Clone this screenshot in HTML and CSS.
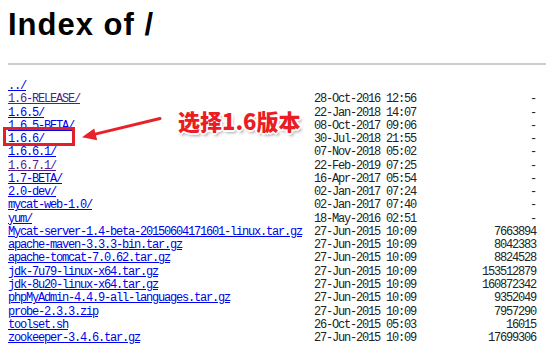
FILE: index.html
```html
<!DOCTYPE html>
<html>
  <head>
    <meta charset="utf-8" />
    <title>Index of /</title>
    <link rel="stylesheet" href="styles.css">
  </head>

  <body>
    <h1>Index of /</h1>
    <hr>

    <div class="listing">
      <a href="../">../</a><span></span><span></span>
      <a class="seen" href="1.6-RELEASE/">1.6-RELEASE/</a><span>28-Oct-2016 12:56</span><span class="size">-</span>
      <a href="1.6.5/">1.6.5/</a><span>22-Jan-2018 14:07</span><span class="size">-</span>
      <a href="1.6.5-BETA/">1.6.5-BETA/</a><span>08-Oct-2017 09:06</span><span class="size">-</span>
      <a href="1.6.6/">1.6.6/</a><span>30-Jul-2018 21:55</span><span class="size">-</span>
      <a href="1.6.6.1/">1.6.6.1/</a><span>07-Nov-2018 05:02</span><span class="size">-</span>
      <a class="seen" href="1.6.7.1/">1.6.7.1/</a><span>22-Feb-2019 07:25</span><span class="size">-</span>
      <a href="1.7-BETA/">1.7-BETA/</a><span>16-Apr-2017 05:54</span><span class="size">-</span>
      <a href="2.0-dev/">2.0-dev/</a><span>02-Jan-2017 07:24</span><span class="size">-</span>
      <a href="mycat-web-1.0/">mycat-web-1.0/</a><span>02-Jan-2017 07:40</span><span class="size">-</span>
      <a href="yum/">yum/</a><span>18-May-2016 02:51</span><span class="size">-</span>
      <a href="Mycat-server-1.4-beta-20150604171601-linux.tar.gz">Mycat-server-1.4-beta-20150604171601-linux.tar.gz</a><span>27-Jun-2015 10:09</span><span class="size">7663894</span>
      <a href="apache-maven-3.3.3-bin.tar.gz">apache-maven-3.3.3-bin.tar.gz</a><span>27-Jun-2015 10:09</span><span class="size">8042383</span>
      <a href="apache-tomcat-7.0.62.tar.gz">apache-tomcat-7.0.62.tar.gz</a><span>27-Jun-2015 10:09</span><span class="size">8824528</span>
      <a href="jdk-7u79-linux-x64.tar.gz">jdk-7u79-linux-x64.tar.gz</a><span>27-Jun-2015 10:09</span><span class="size">153512879</span>
      <a href="jdk-8u20-linux-x64.tar.gz">jdk-8u20-linux-x64.tar.gz</a><span>27-Jun-2015 10:09</span><span class="size">160872342</span>
      <a href="phpMyAdmin-4.4.9-all-languages.tar.gz">phpMyAdmin-4.4.9-all-languages.tar.gz</a><span>27-Jun-2015 10:09</span><span class="size">9352049</span>
      <a href="probe-2.3.3.zip">probe-2.3.3.zip</a><span>27-Jun-2015 10:09</span><span class="size">7957290</span>
      <a href="toolset.sh">toolset.sh</a><span>26-Oct-2015 05:03</span><span class="size">16015</span>
      <a href="zookeeper-3.4.6.tar.gz">zookeeper-3.4.6.tar.gz</a><span>27-Jun-2015 10:09</span><span class="size">17699306</span>
    </div>

    <!-- пометка поверх скриншота -->
    <div class="mark-box"></div>
    <svg class="mark-arrow" width="554" height="356" viewBox="0 0 554 356">
      <line x1="160" y1="118.5" x2="93" y2="134.6" stroke="#e8222a" stroke-width="3" stroke-linecap="round" />
      <polygon points="82,137.3 94.2,128.6 97.2,140.2" fill="#e8222a" />
    </svg>
    <div class="mark-label">选择1.6版本</div>
  </body>
</html>
```

FILE: styles.css
```css
body {
  margin: 7px 8px;
  background: #fff;
  color: #000;
  font-family: "Liberation Sans", Arial, sans-serif;
}

h1 {
  margin: 0;
  font-size: 31px;
  font-weight: bold;
  letter-spacing: 1px;
}

hr {
  margin: 20px -7px 0 0;
  border: 0;
  border-top: 2px solid #cdcdcd;
}

.listing {
  display: grid;
  grid-template-columns: 306px 102px 120px;
  margin-top: 15px;
  font-family: "Liberation Mono", "Courier New", monospace;
  font-size: 12px;
  /* 6px на символ, как в исходном моноширинном шрифте */
  letter-spacing: -1.2px;
  line-height: 13.26px;
  color: #222;
  white-space: pre;
}

.listing a {
  color: #0000ee;
}

.listing a.seen {
  color: #551a8b;
}

.size {
  text-align: right;
}

.mark-box {
  position: absolute;
  left: 3px;
  top: 127px;
  width: 66px;
  height: 13px;
  border: 3px solid #e02228;
}

.mark-arrow {
  position: absolute;
  left: 0;
  top: 0;
  pointer-events: none;
}

.mark-label {
  position: absolute;
  left: 178px;
  top: 108px;
  font-family: "Noto Sans CJK SC", sans-serif;
  font-size: 22px;
  font-weight: 900;
  line-height: 24px;
  color: #ea1c24;
  text-shadow:
    1px 1px 0 #fff, -1px -1px 0 #fff, 1px -1px 0 #fff, -1px 1px 0 #fff,
    2px 0 0 #fff, -2px 0 0 #fff, 0 2px 0 #fff, 0 -2px 0 #fff,
    2px 3px 3px rgba(0, 0, 0, 0.35);
}
```
